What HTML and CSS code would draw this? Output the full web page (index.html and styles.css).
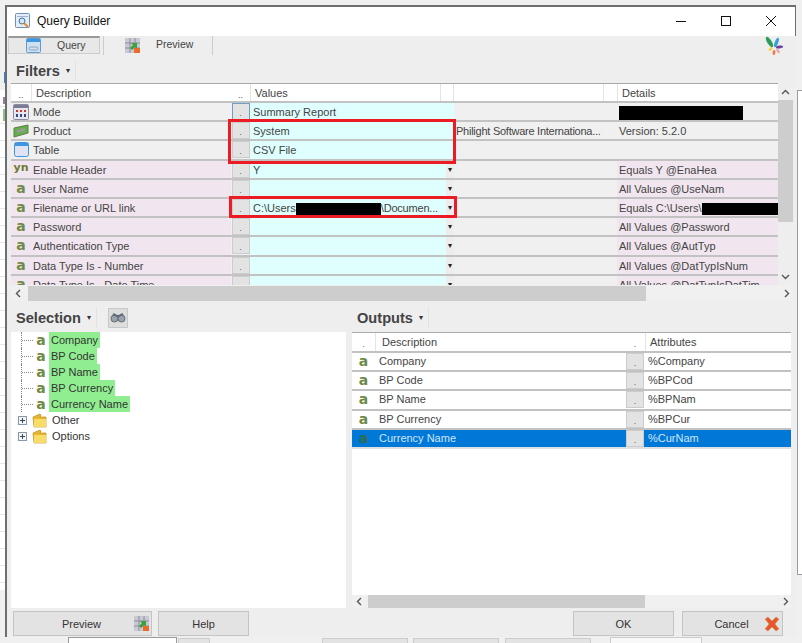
FILE: index.html
```html
<!DOCTYPE html>
<html lang="en">
<head>
    <meta charset="UTF-8">
    <title>Query Builder</title>
    <link rel="stylesheet" href="styles.css">
</head>
<body>
    <!-- bits of the app behind the dialog -->
    <div class="behind behind-left"></div>
    <div class="behind behind-blue"></div>
    <div class="behind behind-pink"></div>
    <div class="behind behind-green"></div>
    <div class="behind behind-right"></div>
    <div class="behind behind-input"></div>
    <div class="behind behind-tab tab-a"></div>
    <div class="behind behind-tab tab-b"></div>
    <div class="behind behind-tab tab-c"></div>
    <div class="behind behind-tab tab-d"></div>
    <div class="behind behind-white"></div>

    <div class="window">
        <div class="titlebar">
            <svg class="app-icon" width="16" height="16" viewBox="0 0 16 16"><rect x="0.5" y="0.5" width="14" height="14" rx="1" fill="#e4eef8" stroke="#6f8fb5"/><rect x="2" y="3" width="11" height="1" fill="#9fb6d0"/><circle cx="7" cy="8" r="3" fill="#cfe6f7" stroke="#44719e"/><path d="M9 10l4 4" stroke="#e08a2c" stroke-width="2"/></svg>
            <span class="title-text">Query Builder</span>
            <div class="win-buttons">
                <svg width="10" height="10" viewBox="0 0 10 10"><path d="M0 5.5h10" stroke="#111"/></svg>
                <svg width="10" height="10" viewBox="0 0 10 10"><rect x="0.5" y="0.5" width="9" height="9" fill="none" stroke="#111"/></svg>
                <svg width="10" height="10" viewBox="0 0 10 10"><path d="M0 0l10 10M10 0L0 10" stroke="#111"/></svg>
            </div>
        </div>

        <div class="tabs">
            <div class="tab tab-active">
                <svg width="15" height="15" viewBox="0 0 15 15"><rect x="0.5" y="0.5" width="14" height="14" rx="1" fill="#cfe0f2" stroke="#5d9bd5"/><rect x="1" y="1" width="13" height="3" fill="#3f96e0"/><rect x="3" y="9" width="9" height="3" rx="1.5" fill="none" stroke="#8fa5bb"/></svg>
                <span>Query</span>
            </div>
            <div class="tab tab-preview">
                <svg width="15" height="15" viewBox="0 0 15 15"><rect width="15" height="15" fill="#c9c9d6"/><path d="M0 5h15M0 10h15M5 0v15M10 0v15" stroke="#8d8d99"/><path d="M5 10l3-3-2-2h6v6l-2-2-3 3z" fill="#3ba23b"/><rect x="9" y="10" width="6" height="5" fill="#ea6a2a"/></svg>
                <span>Preview</span>
            </div>
            <svg class="logo" width="20" height="20" viewBox="0 0 20 20">
                <ellipse cx="5.5" cy="6" rx="2.2" ry="6" transform="rotate(-32 5.5 6)" fill="#2c9b5c"/>
                <ellipse cx="12.5" cy="6.5" rx="1.7" ry="5" transform="rotate(22 12.5 6.5)" fill="#3aa0d8"/>
                <ellipse cx="15.5" cy="11" rx="3.6" ry="1.5" fill="#6a3fa0" transform="rotate(-6 15.5 11)"/>
                <ellipse cx="14" cy="15" rx="1.3" ry="2.6" transform="rotate(-35 14 15)" fill="#e8a7b8"/>
                <ellipse cx="10" cy="16.5" rx="1.4" ry="2.6" transform="rotate(8 10 16.5)" fill="#ef7a3a"/>
                <ellipse cx="6.5" cy="13" rx="1.3" ry="2.4" transform="rotate(50 6.5 13)" fill="#f3d23c"/>
            </svg>
        </div>

        <div class="section-bar section-bar-top">
            <span class="section-title">Filters</span><span class="caret">&#9662;</span><span class="bar-sep"></span>
        </div>

        <div class="filters">
            <div class="filter-main">
                <div class="filter-grid">
                    <div class="filter-head">
                        <span class="dots">..</span>
                        <span class="hcell">Description</span>
                        <span class="dots">..</span>
                        <span class="hcell">Values</span>
                        <span class="hcell"></span>
                        <span class="hcell"></span>
                        <span class="hcell"></span>
                        <span class="hcell">Details</span>
                    </div>

                    <div class="frow">
                        <span class="ficon"><svg width="16" height="16" viewBox="0 0 16 16"><rect x="0.5" y="0.5" width="15" height="15" rx="1" fill="#e7e7f2" stroke="#8a8aa0"/><rect x="1" y="1" width="14" height="3" fill="#7c7c96"/><path d="M3 6h2v2H3zM7 6h2v2H7zM11 6h2v2h-2z" fill="#c0392b"/><path d="M3 10h2v3H3zM7 10h2v3H7zM11 10h2v3h-2z" fill="#34497f"/></svg></span>
                        <span class="fdesc">Mode</span>
                        <span class="fbtn-cell"><span class="dot-btn dot-btn-focus">.</span></span>
                        <span class="fval">Summary Report</span>
                        <span class="fdrop-plain"></span>
                        <span class="fextra"></span>
                        <span class="fdetail"><span class="redact redact-mode"></span></span>
                    </div>
                    <div class="frow">
                        <span class="ficon"><svg width="16" height="14" viewBox="0 0 16 14"><path d="M1 4l14-3v8L1 13z" fill="#63b04a" stroke="#5c7f49"/><path d="M4 6l8-2v3l-8 2z" fill="#9a9a9a"/></svg></span>
                        <span class="fdesc">Product</span>
                        <span class="fbtn-cell"><span class="dot-btn">.</span></span>
                        <span class="fval">System</span>
                        <span class="fdrop-plain"></span>
                        <span class="fextra">Philight Software Internationa...</span>
                        <span class="fdetail">Version: 5.2.0</span>
                    </div>
                    <div class="frow">
                        <span class="ficon"><svg width="15" height="15" viewBox="0 0 15 15"><rect x="0.5" y="0.5" width="14" height="14" rx="2" fill="#dfe3f2" stroke="#3f96e0"/><rect x="1" y="1" width="13" height="3" fill="#3f96e0"/></svg></span>
                        <span class="fdesc">Table</span>
                        <span class="fbtn-cell"><span class="dot-btn">.</span></span>
                        <span class="fval">CSV File</span>
                        <span class="fdrop-plain"></span>
                        <span class="fextra"></span>
                        <span class="fdetail"></span>
                    </div>
                    <div class="frow frow-pink">
                        <span class="ficon ficon-yn">yn</span>
                        <span class="fdesc">Enable Header</span>
                        <span class="fbtn-cell"><span class="dot-btn">.</span></span>
                        <span class="fval">Y</span>
                        <span class="fdrop">&#9662;</span>
                        <span class="fextra"></span>
                        <span class="fdetail">Equals Y @EnaHea</span>
                    </div>
                    <div class="frow frow-pink">
                        <span class="ficon ficon-a">a</span>
                        <span class="fdesc">User Name</span>
                        <span class="fbtn-cell"><span class="dot-btn">.</span></span>
                        <span class="fval"></span>
                        <span class="fdrop">&#9662;</span>
                        <span class="fextra"></span>
                        <span class="fdetail">All Values @UseNam</span>
                    </div>
                    <div class="frow frow-pink">
                        <span class="ficon ficon-a">a</span>
                        <span class="fdesc">Filename or URL link</span>
                        <span class="fbtn-cell"><span class="dot-btn">.</span></span>
                        <span class="fval">C:\Users<span class="redact redact-path"></span><span class="tight">\Documen...</span></span>
                        <span class="fdrop">&#9662;</span>
                        <span class="fextra"></span>
                        <span class="fdetail">Equals C:\Users\<span class="redact redact-detail"></span></span>
                    </div>
                    <div class="frow frow-pink">
                        <span class="ficon ficon-a">a</span>
                        <span class="fdesc">Password</span>
                        <span class="fbtn-cell"><span class="dot-btn">.</span></span>
                        <span class="fval"></span>
                        <span class="fdrop">&#9662;</span>
                        <span class="fextra"></span>
                        <span class="fdetail">All Values @Password</span>
                    </div>
                    <div class="frow frow-pink">
                        <span class="ficon ficon-a">a</span>
                        <span class="fdesc">Authentication Type</span>
                        <span class="fbtn-cell"><span class="dot-btn">.</span></span>
                        <span class="fval"></span>
                        <span class="fdrop">&#9662;</span>
                        <span class="fextra"></span>
                        <span class="fdetail">All Values @AutTyp</span>
                    </div>
                    <div class="frow frow-pink">
                        <span class="ficon ficon-a">a</span>
                        <span class="fdesc">Data Type Is - Number</span>
                        <span class="fbtn-cell"><span class="dot-btn">.</span></span>
                        <span class="fval"></span>
                        <span class="fdrop">&#9662;</span>
                        <span class="fextra"></span>
                        <span class="fdetail">All Values @DatTypIsNum</span>
                    </div>
                    <div class="frow frow-pink">
                        <span class="ficon ficon-a">a</span>
                        <span class="fdesc">Data Type Is - Date Time</span>
                        <span class="fbtn-cell"><span class="dot-btn">.</span></span>
                        <span class="fval"></span>
                        <span class="fdrop">&#9662;</span>
                        <span class="fextra"></span>
                        <span class="fdetail">All Values @DatTypIsDatTim</span>
                    </div>
                </div>
                <div class="vscroll">
                    <svg class="arrow-up" width="9" height="6" viewBox="0 0 9 6"><path d="M1 5l3.5-3.5L8 5" fill="none" stroke="#555" stroke-width="1.4"/></svg>
                    <span class="vthumb"></span>
                    <svg class="arrow-down" width="9" height="6" viewBox="0 0 9 6"><path d="M1 1l3.5 3.5L8 1" fill="none" stroke="#555" stroke-width="1.4"/></svg>
                </div>
            </div>
            <div class="hscroll">
                <svg class="hscroll-arrow" width="6" height="9" viewBox="0 0 6 9"><path d="M5 1L1.5 4.5 5 8" fill="none" stroke="#555" stroke-width="1.4"/></svg>
                <span class="hthumb hthumb-filters"></span>
                <svg class="hscroll-arrow hscroll-end" width="6" height="9" viewBox="0 0 6 9"><path d="M1 1l3.5 3.5L1 8" fill="none" stroke="#555" stroke-width="1.4"/></svg>
            </div>
        </div>

        <div class="lower">
            <div class="selection">
                <div class="section-bar section-bar-low">
                    <span class="section-title">Selection</span><span class="caret">&#9662;</span><span class="bar-sep"></span>
                    <span class="find-btn"><svg width="16" height="11" viewBox="0 0 16 11"><circle cx="4.5" cy="6.5" r="3.5" fill="#9aa2ad" stroke="#626a75"/><circle cx="11.5" cy="6.5" r="3.5" fill="#9aa2ad" stroke="#626a75"/><path d="M3 2l4 2 2 0 4-2" fill="none" stroke="#626a75" stroke-width="2"/></svg></span>
                </div>
                <div class="tree">
                    <div class="tree-item"><span class="tree-line"></span><span class="ficon-a tree-a">a</span><span class="leaf">Company</span></div>
                    <div class="tree-item"><span class="tree-line"></span><span class="ficon-a tree-a">a</span><span class="leaf">BP Code</span></div>
                    <div class="tree-item"><span class="tree-line"></span><span class="ficon-a tree-a">a</span><span class="leaf">BP Name</span></div>
                    <div class="tree-item"><span class="tree-line"></span><span class="ficon-a tree-a">a</span><span class="leaf">BP Currency</span></div>
                    <div class="tree-item"><span class="tree-line"></span><span class="ficon-a tree-a">a</span><span class="leaf">Currency Name</span></div>
                    <div class="tree-item tree-group"><span class="plus"></span><svg width="15" height="15" viewBox="0 0 15 15"><path d="M1 4l7-3 1 1-1 2h6v10H2z" fill="#e8b52e" stroke="#b98f22" stroke-width="0.7"/><path d="M2 6h12v8H2z" fill="#f8dc6a"/></svg><span class="group-label">Other</span></div>
                    <div class="tree-item tree-group"><span class="plus"></span><svg width="15" height="15" viewBox="0 0 15 15"><path d="M1 4l7-3 1 1-1 2h6v10H2z" fill="#e8b52e" stroke="#b98f22" stroke-width="0.7"/><path d="M2 6h12v8H2z" fill="#f8dc6a"/></svg><span class="group-label">Options</span></div>
                </div>
            </div>

            <div class="outputs">
                <div class="section-bar section-bar-low">
                    <span class="section-title">Outputs</span><span class="caret">&#9662;</span><span class="bar-sep"></span>
                </div>
                <div class="out-pane">
                    <div class="out-head">
                        <span class="dots">.</span>
                        <span class="hcell out-desc-head">Description</span>
                        <span class="dots">.</span>
                        <span class="hcell">Attributes</span>
                    </div>
                    <div class="out-row"><span class="ficon-a out-a">a</span><span class="out-name">Company</span><span class="fbtn-cell"><span class="dot-btn">.</span></span><span class="out-attr">%Company</span></div>
                    <div class="out-row"><span class="ficon-a out-a">a</span><span class="out-name">BP Code</span><span class="fbtn-cell"><span class="dot-btn">.</span></span><span class="out-attr">%BPCod</span></div>
                    <div class="out-row"><span class="ficon-a out-a">a</span><span class="out-name">BP Name</span><span class="fbtn-cell"><span class="dot-btn">.</span></span><span class="out-attr">%BPNam</span></div>
                    <div class="out-row"><span class="ficon-a out-a">a</span><span class="out-name">BP Currency</span><span class="fbtn-cell"><span class="dot-btn">.</span></span><span class="out-attr">%BPCur</span></div>
                    <div class="out-row out-selected"><span class="ficon-a out-a">a</span><span class="out-name">Currency Name</span><span class="fbtn-cell"><span class="dot-btn">.</span></span><span class="out-attr">%CurNam</span></div>
                    <div class="out-space"></div>
                    <div class="hscroll hscroll-out">
                        <svg class="hscroll-arrow" width="6" height="9" viewBox="0 0 6 9"><path d="M5 1L1.5 4.5 5 8" fill="none" stroke="#555" stroke-width="1.4"/></svg>
                        <span class="hthumb hthumb-outputs"></span>
                        <svg class="hscroll-arrow hscroll-end" width="6" height="9" viewBox="0 0 6 9"><path d="M1 1l3.5 3.5L1 8" fill="none" stroke="#555" stroke-width="1.4"/></svg>
                    </div>
                </div>
            </div>
        </div>

        <div class="footer">
            <span class="btn btn-preview">Preview<svg class="btn-icon" width="15" height="15" viewBox="0 0 15 15"><rect width="15" height="15" fill="#c9c9d6"/><path d="M0 5h15M0 10h15M5 0v15M10 0v15" stroke="#8d8d99"/><path d="M5 10l3-3-2-2h6v6l-2-2-3 3z" fill="#3ba23b"/><rect x="9" y="10" width="6" height="5" fill="#ea6a2a"/></svg></span>
            <span class="btn btn-help">Help</span>
            <span class="footer-gap"></span>
            <span class="btn btn-ok">OK</span>
            <span class="btn btn-cancel">Cancel<svg class="btn-icon" width="16" height="16" viewBox="0 0 16 16"><path d="M1 3l3-2 4 4 4-4 3 2-4 5 4 5-3 2-4-4-4 4-3-2 4-5z" fill="#e8572a" stroke="#c7a06a" stroke-width="0.6"/></svg></span>
        </div>
    </div>

    <!-- red markup drawn over the screenshot -->
    <div class="mark mark-product"></div>
    <div class="mark mark-file"></div>
</body>
</html>
```

FILE: styles.css
```css
html, body {
    margin: 0;
    padding: 0;
}
body {
    width: 802px;
    height: 643px;
    position: relative;
    overflow: hidden;
    background-color: #f0f0f0;
    font-family: "Liberation Sans", Arial, sans-serif;
    font-size: 11px;
    color: #444;
}
.behind {
    position: absolute;
}
.behind-left {
    left: 0;
    top: 90px;
    width: 5px;
    height: 500px;
    background: repeating-linear-gradient(#fff, #fff 16px, #e6e6e6 16px, #e6e6e6 17px);
}
.behind-blue {
    left: 4px;
    top: 72px;
    width: 2px;
    height: 11px;
    background-color: #1e88e5;
}
.behind-pink {
    left: 3px;
    top: 97px;
    width: 3px;
    height: 7px;
    background-color: #a07a9a;
}
.behind-green {
    left: 3px;
    top: 109px;
    width: 3px;
    height: 12px;
    background-color: #8cc084;
}
.behind-right {
    left: 797px;
    top: 90px;
    width: 6px;
    height: 485px;
    box-sizing: border-box;
    border: 1px solid #9a9aa2;
    background-color: #fff;
}
.behind-input {
    left: 68px;
    top: 637px;
    width: 109px;
    height: 8px;
    box-sizing: border-box;
    border: 1px solid #999;
    background-color: #fff;
}
.behind-tab {
    top: 638px;
    height: 8px;
    box-sizing: border-box;
    border: 1px solid #ccc;
    background-color: #e3e3e3;
}
.tab-a {
    left: 178px;
    width: 32px;
}
.tab-b {
    left: 322px;
    width: 86px;
}
.tab-c {
    left: 413px;
    width: 86px;
}
.tab-d {
    left: 505px;
    width: 86px;
}
.behind-white {
    left: 610px;
    top: 637px;
    width: 90px;
    height: 8px;
    background-color: #f8f8f8;
    border: 1px solid #ccc;
}
.window {
    position: absolute;
    left: 5px;
    top: 5px;
    width: 791px;
    height: 632px;
    box-sizing: border-box;
    border-left: 2px solid #6e6e6e;
    border-top: 2px solid #6e6e6e;
    background-color: #eee;
    display: flex;
    flex-direction: column;
}
.titlebar {
    height: 29px;
    flex: none;
    box-sizing: border-box;
    background-color: #fff;
    display: flex;
    align-items: center;
    padding: 0 0 2px 8px;
    border-right: 1px solid #6e6e6e;
}
.app-icon {
    margin-right: 6px;
}
.title-text {
    font-size: 12px;
    color: #111;
}
.win-buttons {
    margin-left: auto;
    display: flex;
    gap: 35px;
    padding-right: 19px;
}
.tabs {
    height: 20px;
    flex: none;
    display: flex;
    align-items: flex-start;
    position: relative;
    padding-left: 1px;
    font-size: 10.5px;
}
.tab {
    display: flex;
    align-items: center;
    height: 19px;
}
.tab-active {
    width: 92px;
    height: 18px;
    padding-left: 17px;
    box-sizing: border-box;
    gap: 16px;
    background-color: #e8e8e8;
    border: 1px solid #ccc;
    border-top: 2px solid #999;
}
.tab-active span {
    margin-bottom: 2px;
}
.tab-preview {
    margin-left: 3px;
    width: 110px;
    box-sizing: border-box;
    padding-left: 21px;
    gap: 16px;
    border-left: 1px solid #ccc;
    border-right: 1px solid #ccc;
}
.tab-preview span {
    margin-bottom: 4px;
}
.logo {
    position: absolute;
    right: 12px;
    top: 0;
}
.section-bar {
    height: 27px;
    flex: none;
    display: flex;
    align-items: center;
    padding-left: 9px;
}
.section-bar-top {
    box-sizing: border-box;
    padding-top: 2px;
}
.section-title {
    font-size: 14.6px;
    font-weight: bold;
    color: #444;
}
.caret {
    font-size: 8px;
    margin-left: 6px;
    color: #333;
}
.bar-sep {
    width: 1px;
    height: 20px;
    margin-left: 5px;
    background-color: #e2e2e2;
}
.filters {
    flex: none;
    padding-left: 4px;
}
.filter-main {
    display: flex;
    height: 202px;
    overflow: hidden;
}
.filter-grid {
    width: 767px;
    flex: none;
    border-top: 1px solid #aaa;
    box-sizing: border-box;
    height: 202px;
    overflow: hidden;
}
.filter-head {
    display: grid;
    grid-template-columns: 20px 200px 19px 190px 13px 150px 14px 161px;
    grid-template-rows: 17px;
    height: 17px;
    background-color: #fff;
    border-bottom: 2px solid #c2c2c2;
}
.dots {
    font-size: 9px;
    text-align: center;
    line-height: 22px;
    color: #555;
    overflow: hidden;
}
.hcell {
    border-left: 1px solid #e4e4e4;
    padding-left: 4px;
    line-height: 19px;
    font-size: 11px;
    overflow: hidden;
}
.frow {
    display: grid;
    grid-template-columns: 20px 200px 19px 196px 8px 163px 161px;
    grid-template-rows: 17.2px;
    height: 17.2px;
    border-bottom: 2px solid #c2c2c2;
    line-height: 19px;
    background-color: #f0f0f0;
}
.frow-pink .ficon,
.frow-pink .fdesc,
.frow-pink .fdetail {
    background-color: #f1e6ef;
}
.ficon {
    display: flex;
    align-items: center;
    justify-content: center;
    overflow: hidden;
}
.ficon-a {
    font-family: "DejaVu Sans", sans-serif;
    font-weight: bold;
    font-size: 14px;
    color: #6f8a45;
}
.ficon-yn {
    font-family: "DejaVu Sans", sans-serif;
    font-weight: bold;
    font-size: 11px;
    color: #6f7a35;
    align-items: flex-start;
    line-height: 14px;
}
.fdesc {
    padding-left: 2px;
    overflow: hidden;
}
.fbtn-cell {
    display: flex;
    align-items: center;
    justify-content: center;
}
.dot-btn {
    display: block;
    width: 18px;
    height: 17px;
    box-sizing: border-box;
    border: 1px solid #ccc;
    background-color: #e3e3e3;
    font-size: 9px;
    line-height: 18px;
    text-align: center;
    color: #666;
}
.dot-btn-focus {
    border-color: #6f9ec8;
}
.fval {
    background-color: #dfffff;
    padding-left: 3px;
    white-space: nowrap;
    overflow: hidden;
}
.tight {
    letter-spacing: -0.2px;
}
.fdrop-plain {
    background-color: #dfffff;
}
.fdrop {
    background-color: #ededed;
    font-size: 8px;
    line-height: 17px;
    color: #222;
    text-align: center;
}
.fextra {
    padding-left: 2px;
    letter-spacing: -0.25px;
    white-space: nowrap;
    overflow: hidden;
}
.fdetail {
    padding-left: 2px;
    white-space: nowrap;
    overflow: hidden;
}
.redact {
    display: inline-block;
    background-color: #000;
    vertical-align: middle;
}
.redact-mode {
    width: 124px;
    height: 14px;
}
.redact-path {
    width: 85px;
    height: 13px;
}
.redact-detail {
    width: 78px;
    height: 12px;
}
.vscroll {
    width: 15px;
    flex: none;
    position: relative;
    background-color: #eee;
}
.arrow-up {
    position: absolute;
    left: 3px;
    top: 6px;
}
.vthumb {
    display: block;
    height: 122px;
    margin-top: 17px;
    background-color: #cdcdcd;
}
.arrow-down {
    position: absolute;
    left: 3px;
    bottom: 5px;
}
.hscroll {
    height: 16px;
    width: 781px;
    display: flex;
    align-items: center;
    background-color: #f0f0f0;
    position: relative;
}
.hscroll-arrow {
    flex: none;
    margin-left: 4px;
}
.hscroll-end {
    position: absolute;
    right: 2px;
}
.hthumb {
    display: block;
    height: 15px;
    background-color: #cdcdcd;
}
.hthumb-filters {
    width: 618px;
    margin-left: 7px;
}
.lower {
    flex: 1;
    display: flex;
    min-height: 0;
    padding-left: 4px;
}
.section-bar-low {
    height: 31px;
    box-sizing: border-box;
    padding: 2px 0 0 5px;
}
.selection {
    width: 335px;
    flex: none;
    display: flex;
    flex-direction: column;
}
.find-btn {
    margin-left: 11px;
    width: 20px;
    height: 20px;
    box-sizing: border-box;
    border: 1px solid #c8c8c8;
    background-color: #ddd;
    display: flex;
    align-items: center;
    justify-content: center;
}
.tree {
    flex: 1;
    background-color: #fff;
}
.tree-item {
    height: 16px;
    display: flex;
    align-items: center;
    padding-left: 10px;
    color: #333;
}
.tree-line {
    width: 13px;
    height: 16px;
    box-sizing: border-box;
    border-left: 1px dotted #888;
    background: repeating-linear-gradient(90deg, #888, #888 1px, #fff 1px, #fff 2px) 0 8px / 100% 1px no-repeat;
}
.tree-a {
    width: 14px;
    text-align: center;
    margin-right: 1px;
}
.leaf {
    background-color: #90ee90;
    padding: 0 2px;
    line-height: 16px;
    color: #333;
}
.tree-group {
    padding-left: 7px;
}
.plus {
    width: 9px;
    height: 9px;
    box-sizing: border-box;
    border: 1px solid #8896a8;
    margin-right: 5px;
    background: linear-gradient(#445, #445) center / 5px 1px no-repeat, linear-gradient(#445, #445) center / 1px 5px no-repeat, #f2f4f8;
}
.group-label {
    margin-left: 5px;
}
.outputs {
    width: 439px;
    margin-left: 6px;
    flex: none;
    display: flex;
    flex-direction: column;
}
.out-pane {
    flex: 1;
    display: flex;
    flex-direction: column;
    background-color: #fff;
}
.out-head {
    display: grid;
    grid-template-columns: 23px 250px 20px 146px;
    height: 18px;
    border-top: 1px solid #aaa;
    border-bottom: 2px solid #c2c2c2;
    background-color: #fff;
}
.out-desc-head {
    padding-left: 6px;
}
.out-row {
    display: grid;
    grid-template-columns: 23px 250px 20px 146px;
    grid-template-rows: 17.2px;
    height: 17.2px;
    line-height: 17px;
    border-bottom: 2px solid #c2c2c2;
    background-color: #fff;
}
.out-a {
    text-align: center;
}
.out-name {
    padding-left: 4px;
}
.out-attr {
    padding-left: 3px;
}
.out-selected {
    background-color: #0078d7;
    color: #cfe6fa;
    border-bottom-color: #e0e0e0;
}
.out-selected .out-a {
    color: #2e6b50;
}
.out-space {
    flex: 1;
}
.hscroll-out {
    width: 439px;
    height: 13px;
    flex: none;
}
.hthumb-outputs {
    width: 277px;
    height: 13px;
    margin-left: 6px;
}
.footer {
    height: 29px;
    flex: none;
    display: flex;
    align-items: flex-start;
    padding: 3px 0 0 6px;
    box-sizing: border-box;
    gap: 6px;
    background-color: #eee;
}
.btn {
    height: 25px;
    box-sizing: border-box;
    border: 1px solid #c4c4c4;
    padding-top: 1px;
    background-color: #e3e3e3;
    display: flex;
    align-items: center;
    justify-content: center;
    position: relative;
    color: #333;
}
.btn-preview {
    width: 139px;
    padding-right: 2px;
}
.btn-help {
    width: 91px;
}
.footer-gap {
    width: 312px;
}
.btn-ok {
    width: 101px;
}
.btn-cancel {
    width: 101px;
    margin-left: 2px;
    padding-right: 2px;
}
.btn-icon {
    position: absolute;
    right: 2px;
    top: 4px;
}
.mark {
    position: absolute;
    border: 3px solid #ed1c24;
    box-sizing: border-box;
}
.mark-product {
    left: 228px;
    top: 119px;
    width: 228px;
    height: 45px;
}
.mark-file {
    left: 229px;
    top: 196px;
    width: 228px;
    height: 22px;
}
```
